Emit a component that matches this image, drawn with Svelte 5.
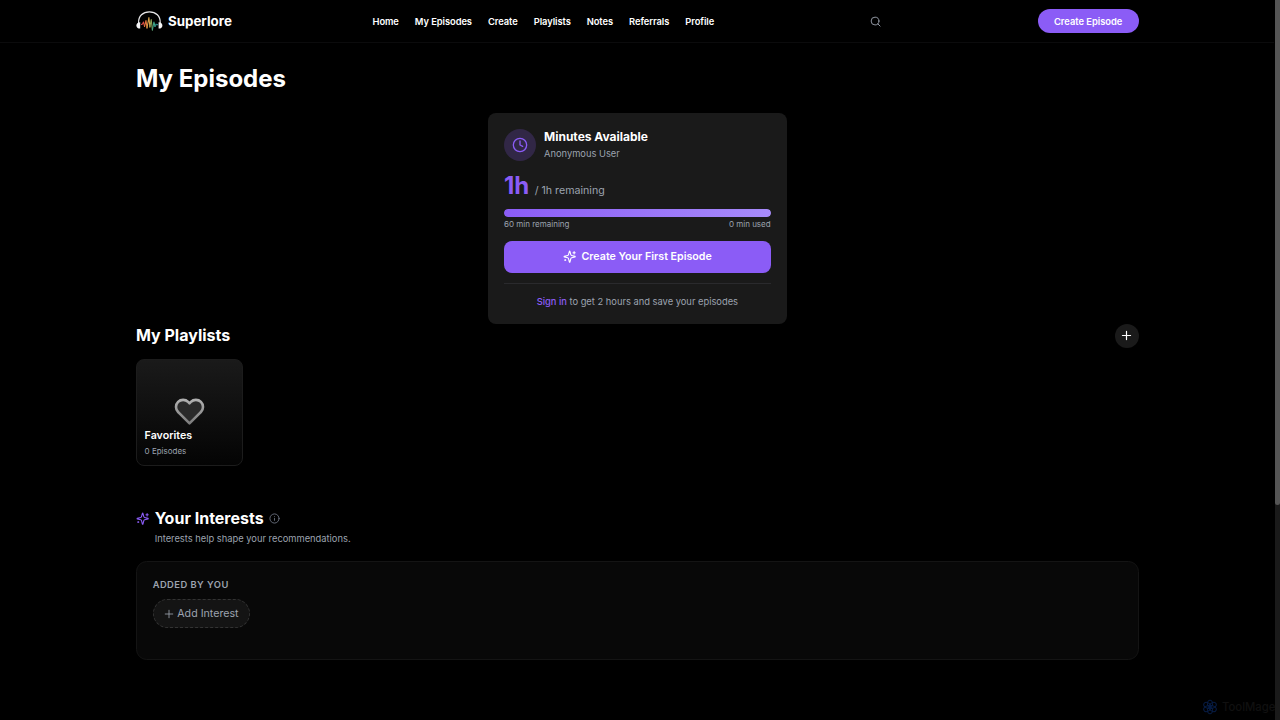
<script>
  const links = ['Home', 'My Episodes', 'Create', 'Playlists', 'Notes', 'Referrals', 'Profile'];

  let totalMinutes = $state(60);
  let usedMinutes = $state(0);
  let remaining = $derived(totalMinutes - usedMinutes);
  let percent = $derived((remaining / totalMinutes) * 100);
</script>

{#snippet sparkles()}
  <svg class="sparkles" viewBox="0 0 24 24" fill="none" stroke="currentColor" stroke-width="2" stroke-linecap="round" stroke-linejoin="round">
    <path d="M9.94 15.5A2 2 0 0 0 8.5 14.06l-6.14-1.58a.5.5 0 0 1 0-.96L8.5 9.94A2 2 0 0 0 9.94 8.5l1.58-6.14a.5.5 0 0 1 .96 0l1.58 6.14a2 2 0 0 0 1.44 1.44l6.14 1.58a.5.5 0 0 1 0 .96l-6.14 1.58a2 2 0 0 0-1.44 1.44l-1.58 6.14a.5.5 0 0 1-.96 0z" />
    <path d="M20 3v4M22 5h-4M4 17v2M5 18H3" />
  </svg>
{/snippet}

<div class="page">
  <header>
    <div class="header-inner">
      <a class="brand" href="/">
        <svg width="27" height="22" viewBox="0 0 27 22" fill="none" stroke-linecap="round">
          <path d="M2.6 13C2.2 6 7 1.8 13.4 1.8S24.6 6 24.2 13" stroke="#e8e8ea" stroke-width="1.2" />
          <path d="M4.2 12.2v6.4C1.6 18.6.4 17.3.4 15.4s1.2-3.2 3.8-3.2z" fill="#f4f4f5" />
          <path d="M22.6 12.2v6.4c2.6 0 3.8-1.3 3.8-3.2s-1.2-3.2-3.8-3.2z" fill="#f4f4f5" />
          <g stroke-width="1.1" stroke-linejoin="round">
            <path d="M5.5 14.5l1-.5 1-2 1 4.5" stroke="#d94b45" />
            <path d="M8.5 16.5l1.5-6 1 7.5" stroke="#e0783e" />
            <path d="M11 18l1.9-10.5 1 9.5" stroke="#d8a24a" />
            <path d="M13.9 17l1.3-7.5 1.2 10.5" stroke="#8fa456" />
            <path d="M16.4 20l1.5-8 1.1 4.5" stroke="#3fa887" />
            <path d="M19 16.5l1-2.5.9 1 .7-.5" stroke="#2d8788" />
          </g>
        </svg>
        <span>Superlore</span>
      </a>
      <nav>
        {#each links as link}
          <a href="/">{link}</a>
        {/each}
      </nav>
      <button class="search" aria-label="Search">
        <svg width="11" height="11" viewBox="0 0 24 24" fill="none" stroke="currentColor" stroke-width="2" stroke-linecap="round">
          <circle cx="11" cy="11" r="8.5" />
          <path d="M22 22l-4.8-4.8" />
        </svg>
      </button>
      <button class="create">Create Episode</button>
    </div>
  </header>

  <main>
    <h1>My Episodes</h1>

    <section class="minutes">
      <div class="minutes-head">
        <div class="clock">
          <svg width="16" height="16" viewBox="0 0 24 24" fill="none" stroke="currentColor" stroke-width="2" stroke-linecap="round" stroke-linejoin="round">
            <circle cx="12" cy="12" r="10" />
            <path d="M12 6v6l4 2" />
          </svg>
        </div>
        <div>
          <h3>Minutes Available</h3>
          <p>Anonymous User</p>
        </div>
      </div>
      <div class="amount"><strong>{remaining / 60}h</strong><span>/ {totalMinutes / 60}h remaining</span></div>
      <div class="track"><div class="fill" style="width: {percent}%"></div></div>
      <div class="legend"><span>{remaining} min remaining</span><span>{usedMinutes} min used</span></div>
      <button class="first">{@render sparkles()}Create Your First Episode</button>
      <p class="signin"><a href="/">Sign in</a> to get 2 hours and save your episodes</p>
    </section>

    <section class="playlists">
      <div class="section-head">
        <h2>My Playlists</h2>
        <button class="add" aria-label="New playlist">
          <svg width="13" height="13" viewBox="0 0 24 24" fill="none" stroke="currentColor" stroke-width="2.2" stroke-linecap="round">
            <path d="M4.5 12h15M12 4.5v15" />
          </svg>
        </button>
      </div>
      <div class="playlist">
        <svg class="heart" width="31" height="31" viewBox="0 0 24 24" fill="#2a2a2a" stroke="url(#heartStroke)" stroke-width="2" stroke-linejoin="round">
          <defs>
            <linearGradient id="heartStroke" x1="0" y1="0" x2="0" y2="1">
              <stop offset="0" stop-color="#b0b0b0" />
              <stop offset="1" stop-color="#7d7d7d" />
            </linearGradient>
          </defs>
          <path d="M20.84 4.61a5.5 5.5 0 0 0-7.78 0L12 5.67l-1.06-1.06a5.5 5.5 0 0 0-7.78 7.78l1.06 1.06L12 21.23l7.78-7.78 1.06-1.06a5.5 5.5 0 0 0 0-7.78z" />
        </svg>
        <h4>Favorites</h4>
        <p>0 Episodes</p>
      </div>
    </section>

    <section class="interests">
      <div class="interests-head">
        {@render sparkles()}
        <h2>Your Interests</h2>
        <svg class="info" width="11" height="11" viewBox="0 0 24 24" fill="none" stroke="currentColor" stroke-width="2" stroke-linecap="round">
          <circle cx="12" cy="12" r="10" />
          <path d="M12 16v-4M12 8h.01" />
        </svg>
      </div>
      <p class="hint">Interests help shape your recommendations.</p>
      <div class="panel">
        <h5>Added by you</h5>
        <button class="add-interest">
          <svg width="10" height="10" viewBox="0 0 24 24" fill="none" stroke="currentColor" stroke-width="2" stroke-linecap="round">
            <path d="M3 12h18M12 3v18" />
          </svg>
          Add Interest
        </button>
      </div>
    </section>
  </main>

  <div class="scrollbar"><div class="thumb"></div></div>

  <div class="watermark">
    <svg width="16" height="16" viewBox="0 0 16 16" fill="none" stroke="#071c44" stroke-width="1">
      {#each [0, 60, 120, 180, 240, 300] as angle}
        <ellipse cx="8" cy="4.8" rx="2.6" ry="3.7" transform="rotate({angle} 8 8)" />
      {/each}
    </svg>
    <span>ToolMage</span>
  </div>
</div>

<style>
  :global(body) {
    background: #000;
  }

  .page {
    position: relative;
    height: 720px;
    overflow: hidden;
    background: #000;
    color: #fff;
    font-family: Inter, 'Liberation Sans', sans-serif;
  }

  h1, h2, h3, h4, h5, p {
    margin: 0;
  }

  a {
    color: inherit;
    text-decoration: none;
  }

  button {
    border: none;
    padding: 0;
    font-family: inherit;
    color: inherit;
    cursor: pointer;
  }

  svg {
    display: block;
    flex: none;
  }

  header {
    height: 42px;
    margin-right: 6px;
    border-bottom: 1px solid #0b0b0c;
  }

  .header-inner {
    display: flex;
    align-items: center;
    width: 1002.67px;
    height: 42px;
    margin-left: 136px;
  }

  .brand {
    display: flex;
    align-items: center;
    gap: 5px;
    width: 236.5px;
    font-size: 13.33px;
    font-weight: 700;
  }

  nav {
    display: flex;
    gap: 16px;
    width: 497.5px;
    font-size: 9.33px;
    font-weight: 600;
    letter-spacing: -0.055px;
    white-space: nowrap;
  }

  .search {
    background: none;
    color: #9ca3af;
  }

  .create {
    width: 101px;
    height: 24px;
    margin-left: auto;
    border-radius: 12px;
    background: #8b5cf6;
    font-size: 9.33px;
    font-weight: 600;
  }

  main {
    width: 1002.67px;
    margin-left: 136px;
    padding-top: 20px;
  }

  h1 {
    font-size: 24px;
    line-height: 32px;
    font-weight: 700;
  }

  h2 {
    font-size: 16px;
    line-height: 24px;
    font-weight: 700;
  }

  .minutes {
    box-sizing: border-box;
    width: 298.67px;
    height: 211px;
    margin: 17.67px auto 0;
    padding: 16px;
    border-radius: 8px;
    background: #1a1a1a;
  }

  .minutes-head {
    display: flex;
    align-items: center;
    gap: 8px;
    height: 32px;
  }

  .clock {
    display: flex;
    align-items: center;
    justify-content: center;
    width: 32px;
    height: 32px;
    border-radius: 50%;
    background: #312746;
    color: #8b5cf6;
  }

  h3 {
    font-size: 12px;
    line-height: 18px;
    font-weight: 700;
  }

  .minutes-head p {
    color: #9ca3af;
    font-size: 9.33px;
    line-height: 15px;
  }

  .amount {
    display: flex;
    align-items: baseline;
    gap: 5.33px;
    height: 32px;
    margin-top: 8.5px;
    line-height: 33px;
  }

  .amount strong {
    color: #8b5cf6;
    font-size: 24px;
    font-weight: 700;
  }

  .amount span {
    color: #9ca3af;
    font-size: 10.67px;
  }

  .track {
    height: 8px;
    margin-top: 7.4px;
    border-radius: 4px;
    background: #2a2a2a;
    overflow: hidden;
  }

  .fill {
    height: 100%;
    border-radius: 4px;
    background: linear-gradient(90deg, #8b5cf6, #a78bfa);
  }

  .legend {
    display: flex;
    justify-content: space-between;
    margin-top: 2.6px;
    color: #9ca3af;
    font-size: 8px;
    line-height: 11px;
  }

  .first {
    display: flex;
    align-items: center;
    justify-content: center;
    gap: 5.33px;
    width: 100%;
    height: 32px;
    margin-top: 10.67px;
    border-radius: 8px;
    background: #8b5cf6;
    font-size: 10.67px;
    font-weight: 600;
  }

  .sparkles {
    width: 13.33px;
    height: 13.33px;
  }

  .signin {
    margin-top: 10.5px;
    padding-top: 10.67px;
    border-top: 1px solid #2a2a2d;
    color: #9ca3af;
    font-size: 9.33px;
    line-height: 14px;
    text-align: center;
  }

  .signin a {
    color: #8b5cf6;
    font-weight: 500;
  }

  .section-head {
    display: flex;
    align-items: center;
    justify-content: space-between;
  }

  .section-head h2 {
    line-height: 22px;
    padding-bottom: 2px;
  }

  .add {
    display: flex;
    align-items: center;
    justify-content: center;
    width: 24px;
    height: 24px;
    border-radius: 50%;
    background: #1a1a1a;
  }

  .playlist {
    display: flex;
    flex-direction: column;
    box-sizing: border-box;
    width: 106.67px;
    height: 106.67px;
    margin-top: 11.33px;
    padding: 36.3px 7.6px 0;
    border: 1px solid #1c1c1c;
    border-radius: 8px;
    background: linear-gradient(#1a1a1a, #040404);
  }

  .heart {
    align-self: center;
  }

  h4 {
    margin-top: 1px;
    font-size: 10.67px;
    line-height: 15px;
    font-weight: 600;
  }

  .playlist p {
    margin-top: 2px;
    color: #9ca3af;
    font-size: 8px;
    line-height: 12px;
  }

  .interests {
    margin-top: 40.67px;
  }

  .interests-head {
    display: flex;
    align-items: center;
    gap: 5.33px;
  }

  .interests-head .sparkles {
    color: #8b5cf6;
  }

  .info {
    color: #6b7280;
  }

  .hint {
    margin-left: 18.67px;
    color: #9ca3af;
    font-size: 9.33px;
    line-height: 17px;
  }

  .panel {
    box-sizing: border-box;
    height: 99px;
    margin-top: 14px;
    padding: 16px 15.67px;
    border: 1px solid #141414;
    border-radius: 10.67px;
    background: #080808;
  }

  h5 {
    color: #9ca3af;
    font-size: 9.33px;
    line-height: 13px;
    font-weight: 600;
    letter-spacing: 0.47px;
    text-transform: uppercase;
  }

  .add-interest {
    display: flex;
    align-items: center;
    justify-content: center;
    gap: 3px;
    width: 97.5px;
    height: 28.67px;
    margin-top: 8px;
    border: 1px dashed #333;
    border-radius: 15px;
    background: #141414;
    color: #9ca3af;
    font-size: 10.67px;
    white-space: nowrap;
  }

  /* page scrollbar */
  .scrollbar {
    position: absolute;
    top: 0;
    right: 0;
    width: 5.5px;
    height: 720px;
    background: #1a1a1a;
  }

  .thumb {
    height: 505px;
    border-radius: 0 0 3px 3px;
    background: #555;
  }

  .watermark {
    position: absolute;
    top: 699px;
    left: 1202px;
    display: flex;
    align-items: center;
    gap: 4px;
    color: #101010;
    font-size: 11.3px;
    font-weight: 500;
  }
</style>
